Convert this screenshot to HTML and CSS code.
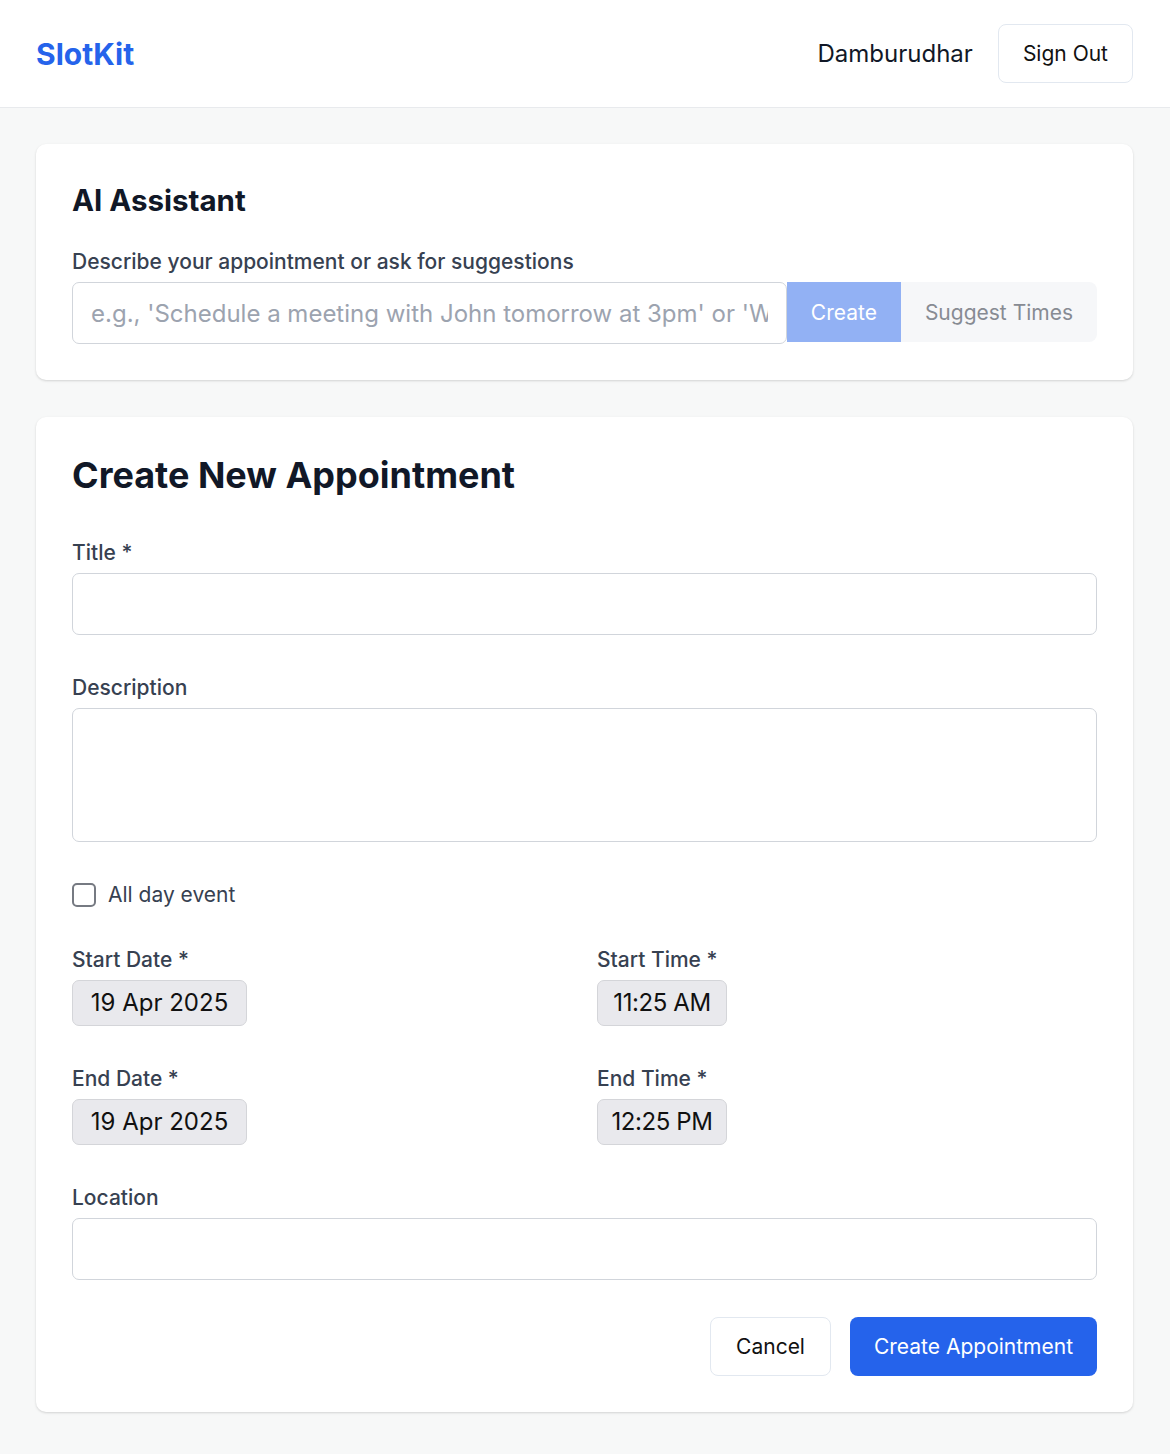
FILE: index.html
```html
<!DOCTYPE html>
<html lang="en">
<head>
    <meta charset="UTF-8">
    <meta name="viewport" content="width=device-width, initial-scale=1.0">
    <title>SlotKit - New Appointment</title>
    <link rel="stylesheet" href="styles.css">
</head>
<body>

    <!-- Top bar -->
    <header class="topbar">
        <a class="logo" href="#">SlotKit</a>
        <div class="user-area">
            <span class="user-name">Damburudhar</span>
            <button class="btn btn-outline">Sign Out</button>
        </div>
    </header>

    <main class="page">

        <!-- AI Assistant -->
        <section class="card">
            <h2 class="card-title">AI Assistant</h2>
            <label class="field-label" for="aiInput">Describe your appointment or ask for suggestions</label>
            <div class="ai-row">
                <input type="text" id="aiInput" class="ai-input" placeholder="e.g., 'Schedule a meeting with John tomorrow at 3pm' or 'What times are free this week?'">
                <button class="ai-btn ai-create">Create</button>
                <button class="ai-btn ai-suggest">Suggest Times</button>
            </div>
        </section>

        <!-- Appointment form -->
        <section class="card">
            <h1 class="form-title">Create New Appointment</h1>

            <form class="appt-form" onsubmit="return false;">
                <div class="field">
                    <label class="field-label" for="title">Title *</label>
                    <input type="text" id="title" class="text-input">
                </div>

                <div class="field">
                    <label class="field-label" for="description">Description</label>
                    <textarea id="description" class="text-input text-area"></textarea>
                </div>

                <label class="check-row">
                    <input type="checkbox" class="check">
                    <span>All day event</span>
                </label>

                <div class="two-col">
                    <div class="field">
                        <span class="field-label">Start Date *</span>
                        <span class="pill pill-date">19 Apr 2025</span>
                    </div>
                    <div class="field">
                        <span class="field-label">Start Time *</span>
                        <span class="pill pill-time">11:25 AM</span>
                    </div>
                </div>

                <div class="two-col">
                    <div class="field">
                        <span class="field-label">End Date *</span>
                        <span class="pill pill-date">19 Apr 2025</span>
                    </div>
                    <div class="field">
                        <span class="field-label">End Time *</span>
                        <span class="pill pill-time">12:25 PM</span>
                    </div>
                </div>

                <div class="field">
                    <label class="field-label" for="location">Location</label>
                    <input type="text" id="location" class="text-input">
                </div>

                <div class="form-actions">
                    <button type="button" class="btn btn-outline">Cancel</button>
                    <button type="submit" class="btn btn-primary">Create Appointment</button>
                </div>
            </form>
        </section>

    </main>

</body>
</html>
```

FILE: styles.css
```css
body {
    font-family: Inter, "Noto Sans", Arial, sans-serif;
    margin: 0;
    padding: 0;
    background-color: #f7f8f8;
    color: #111827;
}
button, input, textarea {
    font-family: inherit;
}
.topbar {
    height: 107px;
    background-color: #fff;
    border-bottom: 1px solid #e8eaed;
    display: flex;
    align-items: center;
    justify-content: space-between;
    padding: 0 37px 0 36px;
}
.logo {
    font-size: 30px;
    font-weight: 700;
    color: #2563eb;
    text-decoration: none;
}
.user-area {
    display: flex;
    align-items: center;
    gap: 25px;
}
.user-name {
    font-size: 24px;
    color: #111827;
}
.btn {
    height: 59px;
    padding: 0 24px;
    border-radius: 8px;
    font-size: 21px;
    cursor: pointer;
}
.btn-outline {
    background-color: #fff;
    border: 1px solid #e2e8f0;
    color: #111;
}
.form-actions .btn-outline {
    padding: 0 25px;
}
.btn-primary {
    background-color: #2563eb;
    border: none;
    color: #fff;
}
.btn-primary:hover {
    background-color: #1d4ed8;
}
.page {
    padding: 36px 37px 41px 36px;
    display: flex;
    flex-direction: column;
    gap: 37px;
}
.card {
    background-color: #fff;
    border-radius: 10px;
    box-shadow: 0 1px 3px rgba(0, 0, 0, 0.1), 0 1px 2px rgba(0, 0, 0, 0.06);
    padding: 36px;
}
.card-title {
    font-size: 29.5px;
    line-height: 40px;
    font-weight: 700;
    margin: 0 0 29px;
}
.form-title {
    font-size: 36px;
    line-height: 45px;
    font-weight: 700;
    margin: 0 0 42px;
}
.field-label {
    display: block;
    font-size: 21px;
    line-height: 25px;
    font-weight: 500;
    color: #374151;
    margin-bottom: 8px;
}
.ai-row {
    display: flex;
    align-items: flex-start;
}
.ai-input {
    flex: 1;
    height: 62px;
    box-sizing: border-box;
    border: 1px solid #d1d5db;
    border-radius: 7px;
    padding: 0 18px;
    font-size: 24px;
    color: #111827;
}
.ai-input::placeholder {
    color: #9ca3af;
}
.ai-btn {
    height: 60px;
    border: none;
    font-size: 21px;
    padding: 0 24px;
}
.ai-create {
    background-color: #92b1f4;
    color: #fff;
}
.ai-suggest {
    background-color: #f6f7f9;
    color: #878b93;
    border-radius: 0 8px 8px 0;
}
.appt-form {
    display: flex;
    flex-direction: column;
    gap: 40px;
}
.text-input {
    display: block;
    width: 100%;
    height: 62px;
    box-sizing: border-box;
    border: 1px solid #d1d5db;
    border-radius: 7px;
    padding: 0 18px;
    font-size: 22px;
}
.text-area {
    height: 134px;
    padding: 14px 18px;
    resize: none;
}
.check-row {
    display: flex;
    align-items: center;
    gap: 12px;
    font-size: 21px;
    line-height: 25px;
    color: #374151;
}
.check {
    appearance: none;
    width: 24px;
    height: 24px;
    margin: 0;
    border: 2px solid #767a82;
    border-radius: 5px;
    box-sizing: border-box;
    background-color: #fff;
}
.check:checked {
    background-color: #2563eb;
    border-color: #2563eb;
}
.two-col {
    display: grid;
    grid-template-columns: 1fr 1fr;
    gap: 25px;
}
.pill {
    display: inline-block;
    height: 46px;
    line-height: 44px;
    box-sizing: border-box;
    text-align: center;
    background-color: #e9e9ed;
    border: 1px solid #d4d5d9;
    border-radius: 7px;
    font-size: 24px;
    color: #111;
}
.pill-date {
    width: 175px;
}
.pill-time {
    width: 130px;
    letter-spacing: -0.4px;
}
.form-actions {
    display: flex;
    justify-content: flex-end;
    gap: 19px;
    margin-top: -3px;
}
```
